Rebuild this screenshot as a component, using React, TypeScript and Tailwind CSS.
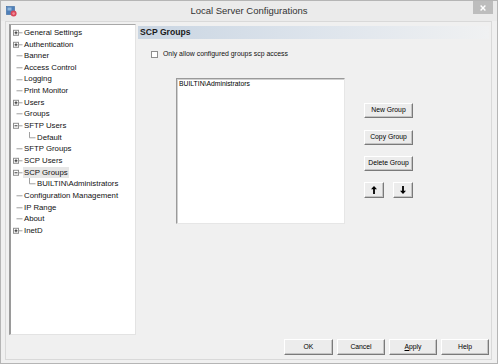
import React from "react";

type Exp = "plus" | "minus" | "leaf";
const items: { t: string; l: number; e: Exp; sel?: boolean }[] = [
  { t: "General Settings", l: 0, e: "plus" },
  { t: "Authentication", l: 0, e: "plus" },
  { t: "Banner", l: 0, e: "leaf" },
  { t: "Access Control", l: 0, e: "leaf" },
  { t: "Logging", l: 0, e: "leaf" },
  { t: "Print Monitor", l: 0, e: "leaf" },
  { t: "Users", l: 0, e: "plus" },
  { t: "Groups", l: 0, e: "leaf" },
  { t: "SFTP Users", l: 0, e: "minus" },
  { t: "Default", l: 1, e: "leaf" },
  { t: "SFTP Groups", l: 0, e: "leaf" },
  { t: "SCP Users", l: 0, e: "plus" },
  { t: "SCP Groups", l: 0, e: "minus", sel: true },
  { t: "BUILTIN\\Administrators", l: 1, e: "leaf" },
  { t: "Configuration Management", l: 0, e: "leaf" },
  { t: "IP Range", l: 0, e: "leaf" },
  { t: "About", l: 0, e: "leaf" },
  { t: "InetD", l: 0, e: "plus" },
];

function Gutter({ e, child }: { e: Exp; child: boolean }) {
  const H = 11.65;
  const cy = 5.8;
  if (child) {
    return (
      <svg width="13" height={H} viewBox={`0 0 13 ${H}`} className="shrink-0">
        <line x1="5.5" y1="0" x2="5.5" y2={cy} stroke="#a0a0a0" strokeWidth="1" />
        <line x1="5.5" y1={cy} x2="11.5" y2={cy} stroke="#a0a0a0" strokeWidth="1" />
      </svg>
    );
  }
  if (e === "leaf") {
    return (
      <svg width="13" height={H} viewBox={`0 0 13 ${H}`} className="shrink-0">
        <line x1="5.5" y1={cy} x2="11.5" y2={cy} stroke="#a0a0a0" strokeWidth="1" />
      </svg>
    );
  }
  return (
    <svg width="13" height={H} viewBox={`0 0 13 ${H}`} className="shrink-0">
      <rect x="2.5" y={cy - 2.5} width="5" height="5" fill="#fff" stroke="#8f8f8f" strokeWidth="1" />
      <line x1="3.5" y1={cy} x2="6.5" y2={cy} stroke="#222" strokeWidth="0.9" />
      {e === "plus" && <line x1="5" y1={cy - 1.5} x2="5" y2={cy + 1.5} stroke="#222" strokeWidth="0.9" />}
      <line x1="7.5" y1={cy} x2="11.5" y2={cy} stroke="#a0a0a0" strokeWidth="1" />
    </svg>
  );
}

function Btn({ children, w, h }: { children: React.ReactNode; w: string; h: string }) {
  return (
    <div
      className={`${w} ${h} flex items-center justify-center bg-[#ececec] border-t border-l border-t-white border-l-white border-r border-b border-r-[#7a7a7a] border-b-[#7a7a7a] shadow-[inset_-1px_-1px_0_#c4c4c4] text-[6.8px] text-black leading-none`}
      style={{ fontFamily: '"Liberation Sans", Arial, sans-serif' }}
    >
      {children}
    </div>
  );
}

function Arrow({ up }: { up: boolean }) {
  return (
    <svg width="6" height="8" viewBox="0 0 6 8">
      {up ? (
        <>
          <polygon points="3,0 6,3.2 0,3.2" fill="#000" />
          <rect x="2.1" y="3" width="1.8" height="5" fill="#000" />
        </>
      ) : (
        <>
          <polygon points="3,8 6,4.8 0,4.8" fill="#000" />
          <rect x="2.1" y="0" width="1.8" height="5" fill="#000" />
        </>
      )}
    </svg>
  );
}

export default function App() {
  return (
    <div
      className="w-[498px] h-[364px] bg-[#f0f0f0] border border-[#b5b5b5] flex flex-col overflow-hidden"
      style={{ fontFamily: '"Liberation Sans", Arial, sans-serif' }}
    >
      {/* Title bar */}
      <div className="h-[20px] flex items-center bg-[#ebebeb] shrink-0">
        <div className="w-[30px] h-full flex items-center pl-[5px]">
          <svg width="11" height="11" viewBox="0 0 11 11">
            <rect x="0.5" y="0.5" width="8" height="8" fill="#4f7fb8" stroke="#3a6aa0" strokeWidth="0.6" />
            <rect x="1.5" y="1.5" width="4" height="3" fill="#8fb7dd" />
            <circle cx="7.6" cy="7.6" r="3" fill="#d9475a" />
            <circle cx="7.6" cy="7.6" r="1.3" fill="#f08a96" />
          </svg>
        </div>
        <div className="flex-1 text-center text-[9.5px] text-[#333333] leading-none">Local Server Configurations</div>
        <div className="w-[30px] h-full flex justify-end items-start pr-[4px]">
          <div className="w-[20px] h-[13px] bg-[#bdbdbd] flex items-center justify-center">
            <svg width="6" height="6" viewBox="0 0 6 6">
              <line x1="0.6" y1="0.6" x2="5.4" y2="5.4" stroke="#fff" strokeWidth="1.4" />
              <line x1="5.4" y1="0.6" x2="0.6" y2="5.4" stroke="#fff" strokeWidth="1.4" />
            </svg>
          </div>
        </div>
      </div>

      {/* Content */}
      <div className="ml-[4px] w-[487px] h-[339px] border border-[#d9d9d9] pl-[3px] pt-[2px] pr-[2px] flex flex-col">
        <div className="flex h-[311px] shrink-0">
          {/* Tree */}
          <div className="w-[127px] h-full bg-white border-l-2 border-t border-l-[#9a9a9a] border-t-[#a8a8a8] border-r border-b border-r-[#e3e3e3] border-b-[#e3e3e3] pt-[2px]">
            {items.map((it, i) => (
              <div key={i} className="flex items-center h-[11.65px]">
                {it.l === 1 && <div className="w-[13px] shrink-0" />}
                <Gutter e={it.e} child={it.l === 1} />
                <span
                  className={`text-[7.8px] leading-none text-[#111] whitespace-nowrap ${it.sel ? "bg-[#e6e6e6] px-[1px] -ml-[1px] h-full flex items-center" : ""}`}
                >
                  {it.t}
                </span>
              </div>
            ))}
          </div>

          {/* Right pane */}
          <div className="flex-1 ml-[2px] flex flex-col">
            <div className="h-[13px] mt-[2px] bg-gradient-to-r from-[#c9d5e2] via-[#dde4ec] to-[#f0f1f2] flex items-center pl-[2px]">
              <span className="text-[8.6px] font-bold text-[#1a1a1a] leading-none">SCP Groups</span>
            </div>
            <div className="mt-[12px] ml-[13px] flex items-center h-[7px]">
              <div className="w-[7px] h-[7px] border border-[#8e8e8e] bg-white shrink-0" />
              <span className="ml-[5px] text-[6.9px] text-[#111] leading-none whitespace-nowrap">
                Only allow configured groups scp access
              </span>
            </div>
            <div className="flex mt-[20px] ml-[38px]">
              <div className="w-[169px] h-[146px] bg-white border-l border-t border-l-[#9a9a9a] border-t-[#9a9a9a] border-r border-b border-r-[#e6e6e6] border-b-[#e6e6e6] shadow-[inset_1px_1px_0_#d0d0d0] pl-[2px] pt-[2px]">
                <div className="text-[6.8px] text-black leading-none whitespace-nowrap">BUILTIN\Administrators</div>
              </div>
              <div className="ml-[19px] pt-[25px] flex flex-col">
                <Btn w="w-[49px]" h="h-[15px]">New Group</Btn>
                <div className="mt-[12px]">
                  <Btn w="w-[49px]" h="h-[15px]">Copy Group</Btn>
                </div>
                <div className="mt-[11px]">
                  <Btn w="w-[49px]" h="h-[15px]">Delete Group</Btn>
                </div>
                <div className="mt-[11px] flex justify-between w-[49px]">
                  <Btn w="w-[20px]" h="h-[16px]"><Arrow up /></Btn>
                  <Btn w="w-[20px]" h="h-[16px]"><Arrow up={false} /></Btn>
                </div>
              </div>
            </div>
          </div>
        </div>

        {/* Bottom buttons */}
        <div className="mt-[4px] flex justify-end gap-[4px]">
          <Btn w="w-[49px]" h="h-[16px]">OK</Btn>
          <Btn w="w-[48px]" h="h-[16px]">Cancel</Btn>
          <Btn w="w-[48px]" h="h-[16px]">
            <span>
              <span className="underline">A</span>pply
            </span>
          </Btn>
          <Btn w="w-[48px]" h="h-[16px]">Help</Btn>
        </div>
      </div>
    </div>
  );
}
